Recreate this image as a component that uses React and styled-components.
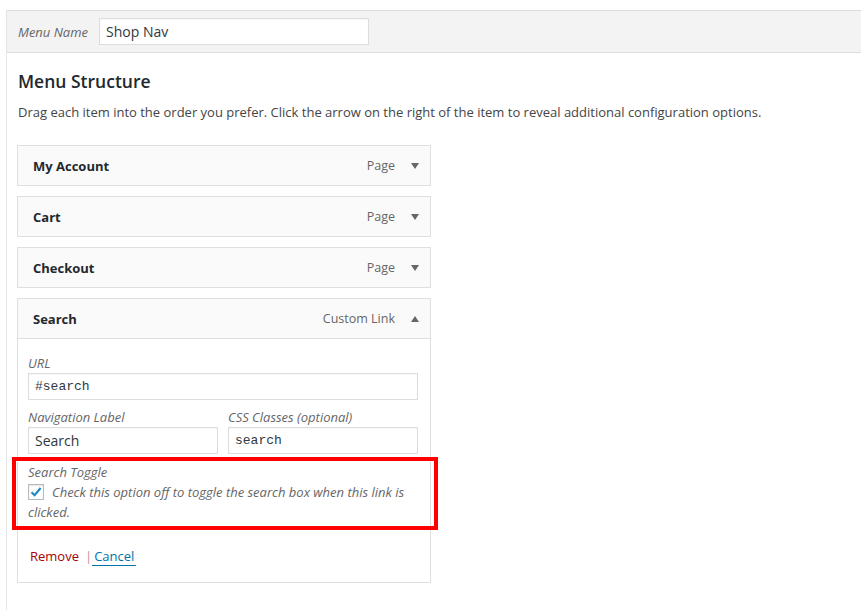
import React from "react";
import styled, { createGlobalStyle } from "styled-components";

const GlobalStyle = createGlobalStyle`
  html, body {
    margin: 0;
    height: 100%;
    background: #ffffff;
  }
  body {
    font-family: "Open Sans", "Noto Sans", sans-serif;
    font-size: 13px;
    color: #444;
  }
  #root {
    height: 100%;
  }
`;

const Page = styled.div`
  height: 100%;
  padding: 10px 0 0 6px;
  box-sizing: border-box;
`;

const Panel = styled.div`
  height: 100%;
  border-left: 1px solid #e5e5e5;
  box-sizing: border-box;
`;

const HeaderBar = styled.div`
  display: flex;
  align-items: center;
  gap: 11px;
  height: 43px;
  padding: 0 11px;
  background: #f3f3f3;
  border-top: 1px solid #dddddd;
  border-bottom: 1px solid #dddddd;
  box-sizing: border-box;
`;

const Label = styled.label`
  display: block;
  font-style: italic;
  font-size: 13px;
  line-height: 20px;
  color: #666;
`;

const TextInput = styled.div`
  width: ${(p) => p.$width}px;
  height: 27px;
  box-sizing: border-box;
  border: 1px solid #dddddd;
  background: #ffffff;
  padding: 0 6px;
  display: flex;
  align-items: center;
  color: #32373c;
  font-size: ${(p) => (p.$mono ? "13px" : "14px")};
  font-family: ${(p) =>
    p.$mono ? '"Liberation Mono", "DejaVu Sans Mono", monospace' : '"Open Sans", sans-serif'};
  box-shadow: inset 0 1px 2px rgba(0, 0, 0, 0.04);
`;

const Body = styled.div`
  padding: 0 10px;
`;

const Title = styled.h3`
  margin: 16px 0 0;
  padding-left: 1px;
  font-size: 17.5px;
  line-height: 24px;
  font-weight: 600;
  color: #23282d;
`;

const Description = styled.p`
  margin: 7px 0 0;
  padding-left: 1px;
  font-size: 13px;
  line-height: 24px;
  color: #444;
`;

const ItemList = styled.div`
  margin-top: 21px;
  display: flex;
  flex-direction: column;
  gap: 10px;
  width: 414px;
`;

const Item = styled.div`
  border: 1px solid #dfdfdf;
  background: #fafafa;
`;

const ItemHandle = styled.div`
  display: flex;
  align-items: center;
  height: 39px;
  padding-left: 15px;
`;

const ItemTitle = styled.span`
  flex: 1;
  font-weight: 700;
  font-size: 13px;
  color: #23282d;
`;

const ItemType = styled.span`
  font-size: 12.5px;
  color: #666;
  margin-right: 5px;
`;

const ArrowBox = styled.span`
  width: 30px;
  display: flex;
  justify-content: center;
  align-items: center;
`;

const Arrow = styled.span`
  width: 0;
  height: 0;
  border-left: 4px solid transparent;
  border-right: 4px solid transparent;
  ${(p) =>
    p.$up
      ? "border-bottom: 6px solid #666;"
      : "border-top: 6px solid #666;"}
`;

const Settings = styled.div`
  background: #ffffff;
  padding: 14px 12px 16px 10px;
  border-top: 1px solid #dfdfdf;
`;

const Field = styled.div``;

const FieldRow = styled.div`
  display: flex;
  gap: 10px;
  margin-top: 7px;
`;

const ToggleField = styled.div`
  position: relative;
  margin-top: 8px;
  width: 390px;

  &::after {
    content: "";
    position: absolute;
    top: -5px;
    left: -16px;
    right: -20px;
    bottom: -8px;
    border: 4px solid #ff0000;
  }
`;

const ToggleText = styled.div`
  font-style: italic;
  color: #666;
  line-height: 20px;
`;

const Checkbox = styled.span`
  display: inline-block;
  width: 16px;
  height: 16px;
  box-sizing: border-box;
  border: 1px solid #b4b9be;
  background: #ffffff;
  vertical-align: -3px;
  margin-right: 8px;
  box-shadow: inset 0 1px 2px rgba(0, 0, 0, 0.1);
  position: relative;

  svg {
    position: absolute;
    left: 0;
    top: 0;
  }
`;

const Actions = styled.div`
  margin-top: 24px;
  line-height: 20px;
  padding-left: 2px;
  display: flex;
  align-items: center;
`;

const RemoveLink = styled.span`
  color: #a00;
`;

const Sep = styled.span`
  color: #c58b91;
  margin: 0 0 0 6px;
`;

const CancelLink = styled.span`
  color: #0073aa;
  border-bottom: 1px solid #0073aa;
  padding: 0 2px;
  line-height: 18px;
`;

const items = [
  { title: "My Account", type: "Page" },
  { title: "Cart", type: "Page" },
  { title: "Checkout", type: "Page" },
];

export default function App() {
  return (
    <Page>
      <GlobalStyle />
      <Panel>
        <HeaderBar>
          <Label>Menu Name</Label>
          <TextInput $width={270}>Shop Nav</TextInput>
        </HeaderBar>
        <Body>
          <Title>Menu Structure</Title>
          <Description>
            Drag each item into the order you prefer. Click the arrow on the right of the item to
            reveal additional configuration options.
          </Description>
          <ItemList>
            {items.map((it) => (
              <Item key={it.title}>
                <ItemHandle>
                  <ItemTitle>{it.title}</ItemTitle>
                  <ItemType>{it.type}</ItemType>
                  <ArrowBox>
                    <Arrow />
                  </ArrowBox>
                </ItemHandle>
              </Item>
            ))}
            <Item>
              <ItemHandle>
                <ItemTitle>Search</ItemTitle>
                <ItemType>Custom Link</ItemType>
                <ArrowBox>
                  <Arrow $up />
                </ArrowBox>
              </ItemHandle>
              <Settings>
                <Field>
                  <Label>URL</Label>
                  <TextInput $width={390} $mono>
                    #search
                  </TextInput>
                </Field>
                <FieldRow>
                  <Field>
                    <Label>Navigation Label</Label>
                    <TextInput $width={190}>Search</TextInput>
                  </Field>
                  <Field>
                    <Label>CSS Classes (optional)</Label>
                    <TextInput $width={190} $mono>
                      search
                    </TextInput>
                  </Field>
                </FieldRow>
                <ToggleField>
                  <Label>Search Toggle</Label>
                  <ToggleText>
                    <Checkbox>
                      <svg width="14" height="14" viewBox="0 0 14 14">
                        <path
                          d="M2.5 7.2 L5.6 10.2 L11.6 3"
                          fill="none"
                          stroke="#1e8cbe"
                          strokeWidth="2.2"
                        />
                      </svg>
                    </Checkbox>
                    Check this option off to toggle the search box when this link is clicked.
                  </ToggleText>
                </ToggleField>
                <Actions>
                  <RemoveLink>Remove</RemoveLink>
                  <Sep>|</Sep>
                  <CancelLink>Cancel</CancelLink>
                </Actions>
              </Settings>
            </Item>
          </ItemList>
        </Body>
      </Panel>
    </Page>
  );
}
